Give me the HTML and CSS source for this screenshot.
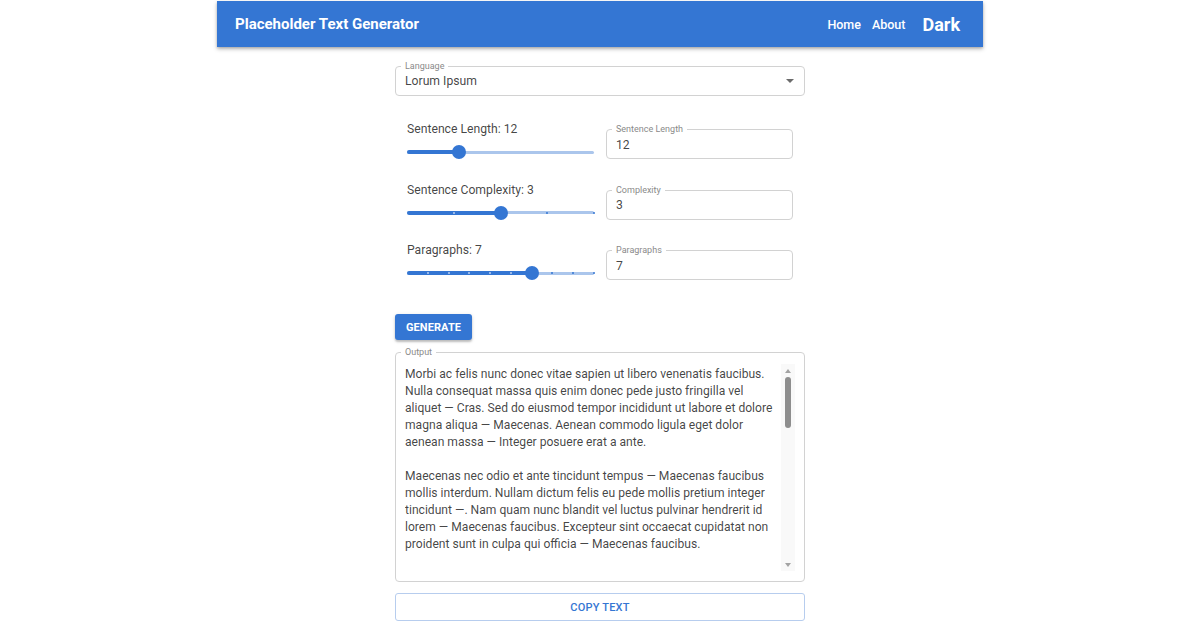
FILE: index.html
```html
<!DOCTYPE html>
<html lang="en">
<head>
<meta charset="utf-8">
<title>Placeholder Text Generator</title>
<link rel="stylesheet" href="styles.css">
</head>
<body>
<div class="page">
  <header class="appbar">
    <div class="brand">Placeholder Text Generator</div>
    <nav class="nav">
      <a class="nav-link" href="#">Home</a>
      <a class="nav-link" href="#">About</a>
      <a class="nav-theme" href="#">Dark</a>
    </nav>
  </header>

  <main class="content">
    <div class="field select-field">
      <span class="field-label">Language</span>
      <span class="select-value">Lorum Ipsum</span>
      <span class="select-arrow"></span>
    </div>

    <section class="controls">
      <div class="control-row">
        <div class="slider-col">
          <div class="slider-label">Sentence Length: 12</div>
          <div class="slider">
            <div class="rail"></div>
            <div class="track" style="width:28%"></div>
            <div class="thumb" style="left:28%"></div>
          </div>
        </div>
        <div class="field input-field">
          <span class="field-label">Sentence Length</span>
          <span class="input-value">12</span>
        </div>
      </div>

      <div class="control-row">
        <div class="slider-col">
          <div class="slider-label">Sentence Complexity: 3</div>
          <div class="slider">
            <div class="rail"></div>
            <div class="track" style="width:50%"></div>
            <span class="tick on" style="left:25%"></span>
            <span class="tick" style="left:75%"></span>
            <span class="tick" style="left:100%"></span>
            <div class="thumb" style="left:50%"></div>
          </div>
        </div>
        <div class="field input-field">
          <span class="field-label">Complexity</span>
          <span class="input-value">3</span>
        </div>
      </div>

      <div class="control-row">
        <div class="slider-col">
          <div class="slider-label">Paragraphs: 7</div>
          <div class="slider">
            <div class="rail"></div>
            <div class="track" style="width:66.67%"></div>
            <span class="tick on" style="left:11.11%"></span>
            <span class="tick on" style="left:22.22%"></span>
            <span class="tick on" style="left:33.33%"></span>
            <span class="tick on" style="left:44.44%"></span>
            <span class="tick on" style="left:55.56%"></span>
            <span class="tick" style="left:77.78%"></span>
            <span class="tick" style="left:88.89%"></span>
            <span class="tick" style="left:100%"></span>
            <div class="thumb" style="left:66.67%"></div>
          </div>
        </div>
        <div class="field input-field">
          <span class="field-label">Paragraphs</span>
          <span class="input-value">7</span>
        </div>
      </div>
    </section>

    <div class="actions">
      <button class="btn-generate">GENERATE</button>
    </div>

    <div class="field output-field">
      <span class="field-label">Output</span>
      <textarea class="output" readonly>Morbi ac felis nunc donec vitae sapien ut libero venenatis faucibus. Nulla consequat massa quis enim donec pede justo fringilla vel aliquet — Cras. Sed do eiusmod tempor incididunt ut labore et dolore magna aliqua — Maecenas. Aenean commodo ligula eget dolor aenean massa — Integer posuere erat a ante.

Maecenas nec odio et ante tincidunt tempus — Maecenas faucibus mollis interdum. Nullam dictum felis eu pede mollis pretium integer tincidunt —. Nam quam nunc blandit vel luctus pulvinar hendrerit id lorem — Maecenas faucibus. Excepteur sint occaecat cupidatat non proident sunt in culpa qui officia — Maecenas faucibus.

Donec sodales sagittis magna — Sed consequat leo eget bibendum sodales. Aliquam lorem ante dapibus in viverra quis feugiat a tellus — Phasellus. Curabitur ullamcorper ultricies nisi nam eget dui etiam rhoncus — Integer tincidunt.

Vivamus elementum semper nisi — Aenean vulputate eleifend tellus. Quisque rutrum aenean imperdiet etiam ultricies nisi vel augue — Curabitur. Ut enim ad minim veniam quis nostrud exercitation ullamco laboris nisi ut aliquip.

Nullam quis ante etiam sit amet orci eget eros faucibus tincidunt — Duis leo. Sed fringilla mauris sit amet nibh donec sodales sagittis magna — Maecenas. Duis aute irure dolor in reprehenderit in voluptate velit esse cillum dolore.

Cras dapibus vivamus elementum semper nisi — Aenean vulputate. Etiam rhoncus maecenas tempus tellus eget condimentum rhoncus sem quam semper libero — Nam. Sit amet adipiscing sem neque sed ipsum — Maecenas faucibus.

Fusce vulputate eleifend sapien — Vestibulum purus quam scelerisque ut mollis sed nonummy id metus. Nullam accumsan lorem in dui cras ultricies mi eu turpis — Integer posuere erat a ante venenatis dapibus.</textarea>
      <div class="scrollbar" aria-hidden="true">
        <span class="scroll-up"></span>
        <span class="scroll-thumb"></span>
        <span class="scroll-down"></span>
      </div>
    </div>

    <button class="btn-copy">COPY TEXT</button>
  </main>
</div>
</body>
</html>
```

FILE: styles.css
```css
* { box-sizing: border-box; }

html, body {
  margin: 0;
  padding: 0;
  background: #ffffff;
  font-family: Roboto, "Liberation Sans", Arial, sans-serif;
  color: rgba(0, 0, 0, 0.74);
}

.page {
  width: 766px;
  margin: 0 auto;
  padding-top: 1px;
}

.appbar {
  height: 46px;
  background: #3476d3;
  color: #fff;
  display: flex;
  align-items: center;
  justify-content: space-between;
  padding: 0 23px 0 18px;
  box-shadow: 0 2px 4px rgba(0, 0, 0, 0.28), 0 1px 2px rgba(0, 0, 0, 0.12);
}

.brand {
  font-size: 15px;
  font-weight: 700;
  letter-spacing: 0;
}

.nav {
  display: flex;
  align-items: center;
}

.nav-link {
  color: #fff;
  text-decoration: none;
  font-size: 12.5px;
  font-weight: 500;
  margin-left: 11px;
}

.nav-theme {
  color: #fff;
  text-decoration: none;
  font-size: 18px;
  font-weight: 700;
  margin-left: 17px;
}

.content {
  width: 410px;
  margin: 19px auto 0;
  display: flex;
  flex-direction: column;
}

.field {
  position: relative;
  border: 1px solid #d2d2d2;
  border-radius: 4px;
  background: #fff;
}

.field-label {
  position: absolute;
  top: -6px;
  left: 5px;
  padding: 0 4px;
  background: #fff;
  font-size: 9px;
  line-height: 11px;
  color: #8a8a8a;
}

.select-field {
  height: 30px;
  display: flex;
  align-items: center;
  padding: 0 10px 0 9px;
}

.select-value {
  flex: 1;
  font-size: 12.2px;
}

.select-arrow {
  width: 0;
  height: 0;
  border-left: 4.5px solid transparent;
  border-right: 4.5px solid transparent;
  border-top: 4.5px solid #6b6b6b;
}

.controls {
  margin-top: 22px;
  padding: 0 12px;
  display: flex;
  flex-direction: column;
  gap: 10.5px;
}

.control-row {
  display: grid;
  grid-template-columns: 187px 187px;
  column-gap: 12px;
  align-items: start;
}

.slider-col {
  display: flex;
  flex-direction: column;
}

.slider-label {
  font-size: 12.2px;
  line-height: 18px;
  padding-top: 2px;
}

.slider {
  position: relative;
  height: 30px;
}

.rail {
  position: absolute;
  left: 0;
  right: 0;
  top: 12.5px;
  height: 3px;
  border-radius: 2px;
  background: #abc6ec;
}

.track {
  position: absolute;
  left: 0;
  top: 12px;
  height: 4px;
  border-radius: 2px;
  background: #3476d3;
}

.tick {
  position: absolute;
  top: 13px;
  width: 2px;
  height: 2px;
  margin-left: -1px;
  border-radius: 1px;
  background: #3476d3;
}

.tick.on {
  background: #b9cff0;
}

.thumb {
  position: absolute;
  top: 7px;
  width: 14px;
  height: 14px;
  margin-left: -7px;
  border-radius: 50%;
  background: #3476d3;
}

.input-field {
  margin-top: 11px;
  height: 30px;
  display: flex;
  align-items: center;
  padding: 1px 10px 0 9px;
}

.input-value {
  font-size: 12.2px;
}

.actions {
  margin-top: 25px;
  display: flex;
}

.btn-generate {
  height: 26px;
  width: 77px;
  border: none;
  border-radius: 3px;
  background: #3476d3;
  color: #fff;
  font-family: Roboto, "Liberation Sans", Arial, sans-serif;
  font-size: 11px;
  font-weight: 700;
  letter-spacing: 0.1px;
  box-shadow: 0 2px 2px rgba(0, 0, 0, 0.2), 0 1px 4px rgba(0, 0, 0, 0.12);
  padding: 0;
}

.output-field {
  margin-top: 12px;
  height: 230px;
  padding: 13px 9px 10px 9px;
}

.output {
  display: block;
  width: 100%;
  height: 205px;
  border: none;
  outline: none;
  resize: none;
  padding: 0 15px 0 0;
  margin: 0;
  font-family: Roboto, "Liberation Sans", Arial, sans-serif;
  font-size: 12.1px;
  line-height: 17px;
  color: rgba(0, 0, 0, 0.74);
  background: #fff;
  overflow: hidden;
}

.scrollbar {
  position: absolute;
  top: 11px;
  right: 9px;
  bottom: 10px;
  width: 14px;
  background: #f9f9f9;
  display: flex;
  flex-direction: column;
  align-items: center;
}

.scroll-up {
  margin-top: 5px;
  width: 0;
  height: 0;
  border-left: 3.5px solid transparent;
  border-right: 3.5px solid transparent;
  border-bottom: 4px solid #a3a3a3;
}

.scroll-thumb {
  margin-top: 4px;
  width: 6px;
  height: 51px;
  border-radius: 3px;
  background: #8e8e8e;
}

.scroll-down {
  margin-top: auto;
  margin-bottom: 4px;
  width: 0;
  height: 0;
  border-left: 3.5px solid transparent;
  border-right: 3.5px solid transparent;
  border-top: 4px solid #a3a3a3;
}

.btn-copy {
  margin-top: 11px;
  height: 28px;
  width: 100%;
  background: #fff;
  border: 1px solid #b7cdee;
  border-radius: 3px;
  color: #3476d3;
  font-family: Roboto, "Liberation Sans", Arial, sans-serif;
  font-size: 11px;
  font-weight: 500;
  letter-spacing: 0.2px;
}
```
